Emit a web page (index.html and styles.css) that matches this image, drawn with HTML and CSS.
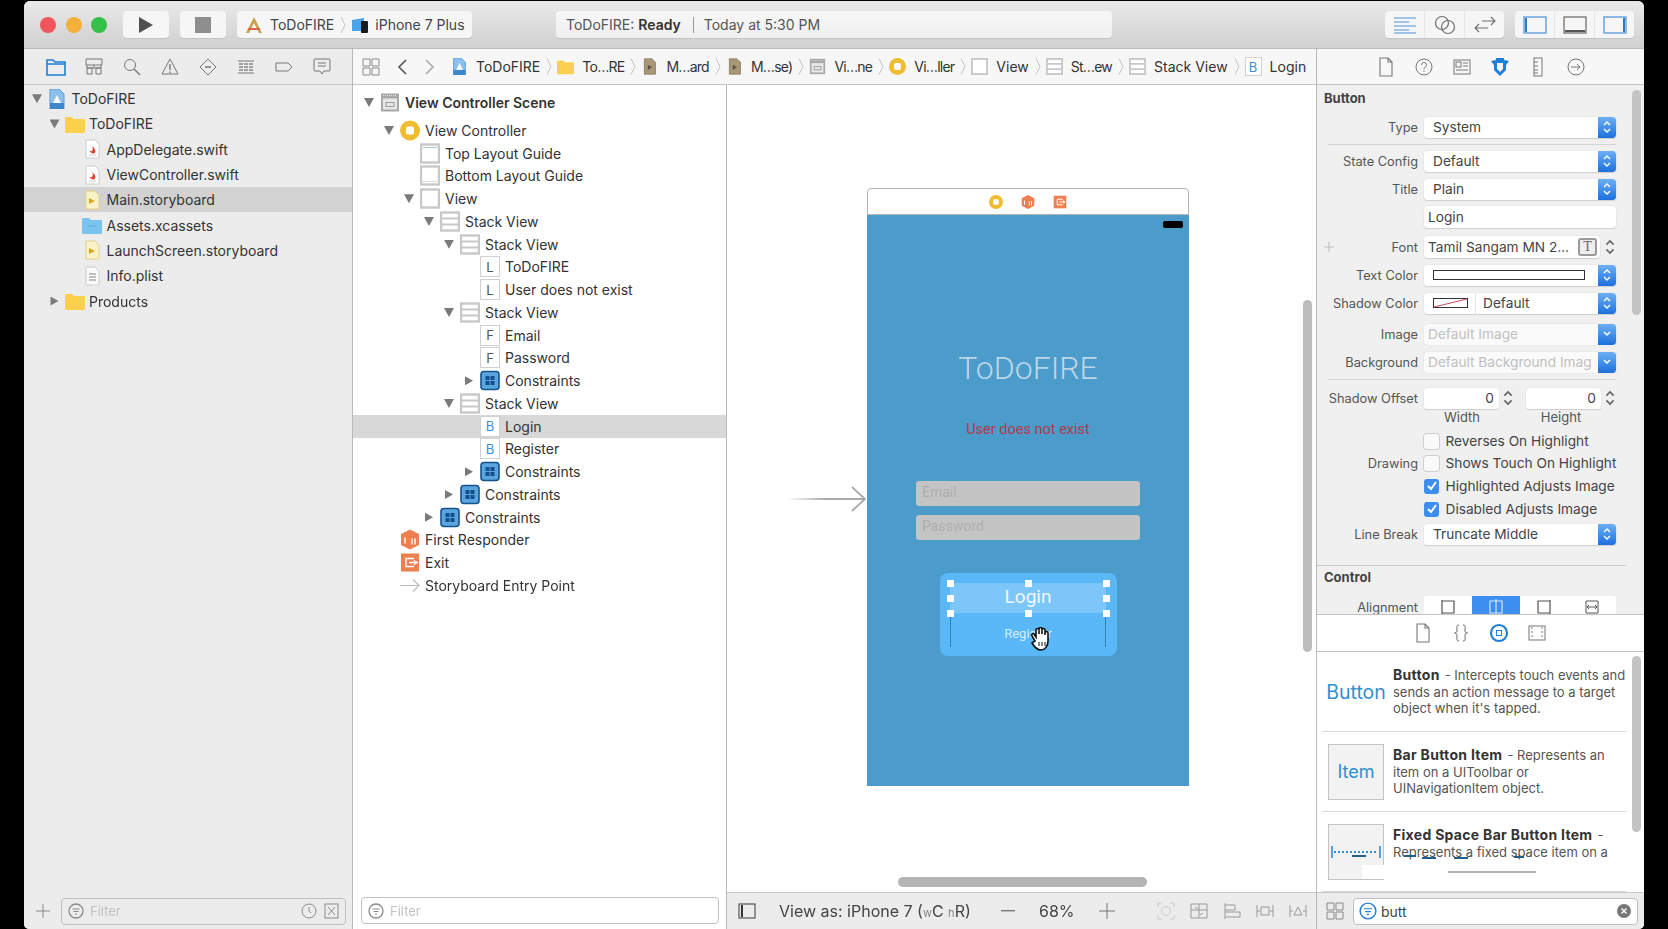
FILE: index.html
```html
<!DOCTYPE html>
<html lang="en">
<head>
    <meta charset="UTF-8">
    <title>ToDoFIRE - Main.storyboard</title>
    <link rel="stylesheet" href="styles.css">
</head>
<body>
    <svg class="defs" width="0" height="0">
        <symbol id="i-swift" viewBox="0 0 20 20"><path d="M4 1h9l4 4v14H4z" fill="#fff" stroke="#ccc"/><path d="M7 12c3 1 5-1 3-5 3 2 4 5 3 7-2 1-4 0-6-2z" fill="#e0452f"/><path d="M7 16h7" stroke="#ccc"/></symbol>
        <symbol id="i-board" viewBox="0 0 20 20"><path d="M4 1h9l4 4v14H4z" fill="#fbf3c8" stroke="#e0cf8a"/><path d="M7 8l6 3-6 3z" fill="#d9a520"/></symbol>
        <symbol id="i-brown" viewBox="0 0 20 20"><path d="M4 1h9l4 4v14H4z" fill="#a89878" stroke="#8c7d60"/><path d="M8 8l5 3-5 3z" fill="#5d5140"/></symbol>
        <symbol id="i-plist" viewBox="0 0 20 20"><path d="M4 1h9l4 4v14H4z" fill="#fafafa" stroke="#ccc"/><path d="M7 8h7M7 11h7M7 14h7" stroke="#aaa" stroke-width="1.4"/></symbol>
        <symbol id="i-folder" viewBox="0 0 20 20"><path d="M0 4a1 1 0 0 1 1-1h6l2 2h10a1 1 0 0 1 1 1v12a1 1 0 0 1-1 1H1a1 1 0 0 1-1-1z" fill="#fcd04f"/></symbol>
        <symbol id="i-assets" viewBox="0 0 20 20"><path d="M0 4a1 1 0 0 1 1-1h6l2 2h10a1 1 0 0 1 1 1v12a1 1 0 0 1-1 1H1a1 1 0 0 1-1-1z" fill="#78c4ee"/><path d="M6 11h8" stroke="#5aa8d8"/></symbol>
        <symbol id="i-project" viewBox="0 0 20 20"><path d="M3 0h9l5 5v15H3z" fill="#8cc0ef" stroke="#5a9bd8"/><path d="M10 6l4 8H6z" fill="#fff"/><path d="M3 14h14v6H3z" fill="#3d87cf"/></symbol>
        <symbol id="i-scene" viewBox="0 0 20 20"><rect x="1" y="1" width="18" height="18" fill="#a8a8a8"/><rect x="3" y="6" width="14" height="11" fill="#e8e8e8"/><rect x="6" y="10" width="8" height="4" fill="none" stroke="#999"/><path d="M3 3h14" stroke="#e0e0e0" stroke-dasharray="1 1"/></symbol>
        <symbol id="i-vc" viewBox="0 0 20 20"><circle cx="10" cy="10" r="10" fill="#f0bd30"/><rect x="6" y="6" width="8" height="8" rx="2" fill="#fff"/></symbol>
        <symbol id="i-top" viewBox="0 0 20 20"><rect x="1" y="1" width="18" height="18" fill="#fff" stroke="#c8c8c8" stroke-width="2.4"/><path d="M3 4h14" stroke="#a9c4d6"/></symbol>
        <symbol id="i-bottom" viewBox="0 0 20 20"><rect x="1" y="1" width="18" height="18" fill="#fff" stroke="#c8c8c8" stroke-width="2.4"/><path d="M3 16h14" stroke="#ddd"/></symbol>
        <symbol id="i-view" viewBox="0 0 20 20"><rect x="1" y="1" width="18" height="18" fill="#fff" stroke="#c8c8c8" stroke-width="2.4"/></symbol>
        <symbol id="i-stack" viewBox="0 0 20 20"><rect x="1" y="1" width="18" height="18" fill="#fff" stroke="#c8c8c8" stroke-width="2.4"/><path d="M2 7h16M2 13h16" stroke="#c8c8c8" stroke-width="2"/></symbol>
        <symbol id="i-constraints" viewBox="0 0 20 20"><rect x="1" y="1" width="18" height="18" rx="3" fill="#5ba5df" stroke="#14538f" stroke-width="1.6"/><path d="M5.500 5.500h4v4h-4zM10.500 5.500h4v4h-4zM5.500 10.500h4v4h-4zM10.500 10.500h4v4h-4z" fill="#134f8a"/></symbol>
        <symbol id="i-responder" viewBox="0 0 20 20"><path d="M10 0l9 4.500v11L10 20l-9-4.500v-11z" fill="#ee7f50"/><path d="M5 8v6M12 9v6M15 9v6" stroke="#fff" stroke-width="1.4"/></symbol>
        <symbol id="i-exit" viewBox="0 0 20 20"><rect x="1" y="1" width="18" height="18" fill="#ee7f50"/><path d="M14 6H6v8h8M9 10h8M14 8l3 2-3 2" fill="none" stroke="#fff" stroke-width="1.4"/></symbol>
        <symbol id="i-arrow" viewBox="0 0 20 20"><path d="M0 10h19M13 4l6 6-6 6" fill="none" stroke="#bbb" stroke-width="1.1"/></symbol>
        <symbol id="i-chev" viewBox="0 0 6 18"><path d="M1 1l4 8-4 8" fill="none" stroke="#c4c4c4"/></symbol>
        <symbol id="i-updown" viewBox="0 0 10 16"><path d="M2 6l3-3 3 3M2 10l3 3 3-3" fill="none" stroke="currentColor" stroke-width="1.4"/></symbol>
        <symbol id="i-filter" viewBox="0 0 16 16"><circle cx="8" cy="8" r="7" fill="none" stroke="currentColor" stroke-width="1.3"/><path d="M4.500 6h7M5.500 8.500h5M7 11h2" stroke="currentColor"/></symbol>
        <symbol id="i-grid" viewBox="0 0 18 18"><path d="M1 1h7v7H1zM10 1h7v7h-7zM1 10h7v7H1zM10 10h7v7h-7z" fill="none" stroke="currentColor"/></symbol>
        <symbol id="i-doc" viewBox="0 0 16 20"><path d="M2 1h8l4 4v14H2zM10 1v4h4" fill="none" stroke="#777" stroke-width="1.1"/></symbol>
    </svg>

    <div class="window">
        <header class="titlebar">
            <div class="lights">
                <span class="light red"></span>
                <span class="light yellow"></span>
                <span class="light green"></span>
            </div>
            <div class="tbtn"><svg width="16" height="18" viewBox="0 0 16 18"><path d="M1 1l14 8-14 8z" fill="#505050"/></svg></div>
            <div class="tbtn"><span class="stop"></span></div>
            <div class="tbtn scheme">
                <svg class="hammer" width="20" height="20" viewBox="0 0 20 20"><path d="M10 2l8 16h-3L10 8 5 18H2z" fill="#c9a24a"/><path d="M4 14h12" stroke="#d9694a" stroke-width="2"/></svg>
                <span>ToDoFIRE</span>
                <svg class="chev-lg" width="6" height="18"><use href="#i-chev"/></svg>
                <svg width="18" height="18" viewBox="0 0 18 18"><path d="M1 4l12-2v13H1z" fill="#4da3e8"/><rect x="10" y="5" width="7" height="12" rx="1" fill="#1a1a1a"/></svg>
                <span>iPhone 7 Plus</span>
            </div>
            <div class="activity">
                <span>ToDoFIRE: <b>Ready</b></span>
                <i class="activity-sep"></i>
                <span>Today at 5:30 PM</span>
            </div>
            <div class="tgroups">
                <div class="tgroup">
                    <span class="seg"><svg width="24" height="20" viewBox="0 0 24 20"><path d="M1 3h22M1 7h15M1 11h22M1 15h15M1 18h22" stroke="#4a90d9" stroke-width="1.2"/></svg></span>
                    <span class="seg"><svg width="22" height="20" viewBox="0 0 22 20"><circle cx="8" cy="8" r="6.500" fill="none" stroke="#6e6e6e" stroke-width="1.2"/><circle cx="14" cy="12" r="6.500" fill="none" stroke="#6e6e6e" stroke-width="1.2"/></svg></span>
                    <span class="seg"><svg width="24" height="20" viewBox="0 0 24 20"><path d="M9 6h13M18 2l4 4-4 4M15 13H2M6 9l-4 4 4 4" fill="none" stroke="#6e6e6e" stroke-width="1.1"/></svg></span>
                </div>
                <div class="tgroup">
                    <span class="seg"><svg width="24" height="18" viewBox="0 0 24 18"><rect x="1" y="1" width="22" height="16" fill="none" stroke="#4a90d9" stroke-width="1.2"/><path d="M3 2v14" stroke="#2f78c4" stroke-width="2"/></svg></span>
                    <span class="seg"><svg width="24" height="18" viewBox="0 0 24 18"><rect x="1" y="1" width="22" height="16" fill="none" stroke="#666" stroke-width="1.2"/><path d="M2 15h20" stroke="#555" stroke-width="2"/></svg></span>
                    <span class="seg"><svg width="24" height="18" viewBox="0 0 24 18"><rect x="1" y="1" width="22" height="16" fill="none" stroke="#4a90d9" stroke-width="1.2"/><path d="M21 2v14" stroke="#2f78c4" stroke-width="2"/></svg></span>
                </div>
            </div>
        </header>

        <div class="workspace">
            <aside class="navigator">
                <div class="nav-tabs">
                    <svg width="20" height="18" viewBox="0 0 20 18"><path d="M1 2h6l2 2h10v13H1zM1 6h18" fill="none" stroke="#1f7fd6" stroke-width="1.6"/></svg>
                    <svg width="18" height="18" viewBox="0 0 18 18"><path d="M1 1h16v6H1zM2 7v3h14V7M9 7v3M2 10h5v6H2zM11 10h5v6h-5z" fill="none" stroke="#777"/></svg>
                    <svg width="18" height="18" viewBox="0 0 18 18"><circle cx="7" cy="7" r="5.500" fill="none" stroke="#777"/><path d="M11 11l6 6" stroke="#777" stroke-width="1.4"/></svg>
                    <svg width="18" height="18" viewBox="0 0 18 18"><path d="M9 1l8 15H1z" fill="none" stroke="#777"/><path d="M9 6v6M9 13.500v1.500" stroke="#777" stroke-width="1.4"/></svg>
                    <svg width="18" height="18" viewBox="0 0 18 18"><path d="M9 1l8 8-8 8-8-8z" fill="none" stroke="#777"/><path d="M6 9h6" stroke="#777" stroke-width="1.4"/></svg>
                    <svg width="18" height="18" viewBox="0 0 18 18"><path d="M1 3h16M1 15h16" stroke="#777"/><path d="M2 6h14M2 9h14M2 12h14" stroke="#888" stroke-width="1.500" stroke-dasharray="4 1"/></svg>
                    <svg width="18" height="18" viewBox="0 0 18 18"><path d="M1 5h12l4 4-4 4H1z" fill="none" stroke="#777"/></svg>
                    <svg width="18" height="18" viewBox="0 0 18 18"><path d="M2 1h14a1 1 0 0 1 1 1v10a1 1 0 0 1-1 1h-5l-2 3-2-3H2a1 1 0 0 1-1-1V2a1 1 0 0 1 1-1zM5 5h8M5 8h8" fill="none" stroke="#777"/></svg>
                </div>
                <div class="files">
                    <div class="file lv0"><i class="tri down"></i><svg><use href="#i-project"/></svg><span>ToDoFIRE</span></div>
                    <div class="file lv1"><i class="tri down"></i><svg><use href="#i-folder"/></svg><span>ToDoFIRE</span></div>
                    <div class="file lv2"><i class="tri none"></i><svg><use href="#i-swift"/></svg><span>AppDelegate.swift</span></div>
                    <div class="file lv2"><i class="tri none"></i><svg><use href="#i-swift"/></svg><span>ViewController.swift</span></div>
                    <div class="file lv2 current"><i class="tri none"></i><svg><use href="#i-board"/></svg><span>Main.storyboard</span></div>
                    <div class="file lv2"><i class="tri none"></i><svg><use href="#i-assets"/></svg><span>Assets.xcassets</span></div>
                    <div class="file lv2"><i class="tri none"></i><svg><use href="#i-board"/></svg><span>LaunchScreen.storyboard</span></div>
                    <div class="file lv2"><i class="tri none"></i><svg><use href="#i-plist"/></svg><span>Info.plist</span></div>
                    <div class="file lv1"><i class="tri right"></i><svg><use href="#i-folder"/></svg><span>Products</span></div>
                </div>
                <div class="filter-bar">
                    <svg class="plus" width="14" height="14" viewBox="0 0 14 14"><path d="M7 0v14M0 7h14" stroke="#8a8a8a"/></svg>
                    <div class="filter-box">
                        <svg class="filter-icon" width="16" height="16"><use href="#i-filter"/></svg>
                        <span class="filter-text">Filter</span>
                        <svg class="filter-end" width="16" height="16" viewBox="0 0 16 16"><circle cx="8" cy="8" r="7" fill="none" stroke="#8a8a8a"/><path d="M8 4v4l2 2" fill="none" stroke="#8a8a8a"/></svg>
                        <svg width="15" height="16" viewBox="0 0 15 16"><rect x="1" y="1" width="13" height="14" fill="none" stroke="#8a8a8a"/><path d="M4 4l7 8M11 4l-7 8" stroke="#8a8a8a"/></svg>
                    </div>
                </div>
            </aside>

            <main class="editor">
                <div class="crumbs">
                    <svg class="crumb-grid" width="18" height="18"><use href="#i-grid"/></svg>
                    <svg class="crumb-back" width="10" height="16" viewBox="0 0 10 16"><path d="M9 1L2 8l7 7" fill="none" stroke="#555" stroke-width="1.6"/></svg>
                    <svg class="crumb-fwd" width="10" height="16" viewBox="0 0 10 16"><path d="M1 1l7 7-7 7" fill="none" stroke="#aaa" stroke-width="1.6"/></svg>
                    <div class="crumb"><svg><use href="#i-project"/></svg><span>ToDoFIRE</span></div>
                    <div class="crumb"><svg><use href="#i-folder"/></svg><span class="abbr">To…RE</span></div>
                    <div class="crumb"><svg><use href="#i-brown"/></svg><span class="abbr">M…ard</span></div>
                    <div class="crumb"><svg><use href="#i-brown"/></svg><span class="abbr">M…se)</span></div>
                    <div class="crumb"><svg><use href="#i-scene"/></svg><span class="abbr">Vi…ne</span></div>
                    <div class="crumb"><svg><use href="#i-vc"/></svg><span class="abbr">Vi…ller</span></div>
                    <div class="crumb"><svg><use href="#i-view"/></svg><span>View</span></div>
                    <div class="crumb"><svg><use href="#i-stack"/></svg><span class="abbr">St…ew</span></div>
                    <div class="crumb"><svg><use href="#i-stack"/></svg><span>Stack View</span></div>
                    <div class="crumb last"><b class="letter blue">B</b><span>Login</span></div>
                </div>

                <div class="editor-body">
                    <section class="outline">
                        <div class="nodes">
                            <div class="node lv0 scene-row"><i class="tri down"></i><svg><use href="#i-scene"/></svg><span>View Controller Scene</span></div>
                            <div class="node lv1"><i class="tri down"></i><svg><use href="#i-vc"/></svg><span>View Controller</span></div>
                            <div class="node lv2"><i class="tri none"></i><svg><use href="#i-top"/></svg><span>Top Layout Guide</span></div>
                            <div class="node lv2"><i class="tri none"></i><svg><use href="#i-bottom"/></svg><span>Bottom Layout Guide</span></div>
                            <div class="node lv2"><i class="tri down"></i><svg><use href="#i-view"/></svg><span>View</span></div>
                            <div class="node lv3"><i class="tri down"></i><svg><use href="#i-stack"/></svg><span>Stack View</span></div>
                            <div class="node lv4"><i class="tri down"></i><svg><use href="#i-stack"/></svg><span>Stack View</span></div>
                            <div class="node lv5"><i class="tri none"></i><b class="letter">L</b><span>ToDoFIRE</span></div>
                            <div class="node lv5"><i class="tri none"></i><b class="letter">L</b><span>User does not exist</span></div>
                            <div class="node lv4"><i class="tri down"></i><svg><use href="#i-stack"/></svg><span>Stack View</span></div>
                            <div class="node lv5"><i class="tri none"></i><b class="letter">F</b><span>Email</span></div>
                            <div class="node lv5"><i class="tri none"></i><b class="letter">F</b><span>Password</span></div>
                            <div class="node lv5"><i class="tri right"></i><svg><use href="#i-constraints"/></svg><span>Constraints</span></div>
                            <div class="node lv4"><i class="tri down"></i><svg><use href="#i-stack"/></svg><span>Stack View</span></div>
                            <div class="node lv5 current"><i class="tri none"></i><b class="letter blue">B</b><span>Login</span></div>
                            <div class="node lv5"><i class="tri none"></i><b class="letter blue">B</b><span>Register</span></div>
                            <div class="node lv5"><i class="tri right"></i><svg><use href="#i-constraints"/></svg><span>Constraints</span></div>
                            <div class="node lv4"><i class="tri right"></i><svg><use href="#i-constraints"/></svg><span>Constraints</span></div>
                            <div class="node lv3"><i class="tri right"></i><svg><use href="#i-constraints"/></svg><span>Constraints</span></div>
                            <div class="node lv1"><i class="tri none"></i><svg><use href="#i-responder"/></svg><span>First Responder</span></div>
                            <div class="node lv1"><i class="tri none"></i><svg><use href="#i-exit"/></svg><span>Exit</span></div>
                            <div class="node lv1"><i class="tri none"></i><svg><use href="#i-arrow"/></svg><span>Storyboard Entry Point</span></div>
                        </div>
                        <div class="filter-bar outline-filter">
                            <div class="filter-box white">
                                <svg class="filter-icon" width="16" height="16"><use href="#i-filter"/></svg>
                                <span class="filter-text">Filter</span>
                            </div>
                        </div>
                    </section>

                    <section class="canvas">
                        <div class="stage">
                            <svg class="entry-arrow" width="80" height="30" viewBox="0 0 80 30">
                                <defs><linearGradient id="fade"><stop offset="0" stop-color="#aaa" stop-opacity="0"/><stop offset=".5" stop-color="#aaa"/></linearGradient></defs>
                                <rect y="14" width="78" height="2" fill="url(#fade)"/>
                                <path d="M65 3l13 12-13 12" fill="none" stroke="#aaa" stroke-width="1.8"/>
                            </svg>
                            <div class="scene">
                                <div class="scene-bar">
                                    <svg width="14" height="14"><use href="#i-vc"/></svg>
                                    <svg width="14" height="14"><use href="#i-responder"/></svg>
                                    <svg width="14" height="14"><use href="#i-exit"/></svg>
                                </div>
                                <div class="phone">
                                    <span class="battery"></span>
                                    <div class="app-title">ToDoFIRE</div>
                                    <div class="app-error">User does not exist</div>
                                    <div class="app-field first">Email</div>
                                    <div class="app-field">Password</div>
                                    <div class="app-buttons">
                                        <div class="selection">
                                            <div class="app-login">Login</div>
                                            <i class="rail left"></i>
                                            <i class="rail right"></i>
                                            <i class="handle h1"></i><i class="handle h2"></i><i class="handle h3"></i>
                                            <i class="handle h4"></i><i class="handle h5"></i>
                                            <i class="handle h6"></i><i class="handle h7"></i><i class="handle h8"></i>
                                        </div>
                                        <div class="app-register">Register</div>
                                        <svg class="hand" width="22" height="24" viewBox="0 0 22 24"><path d="M5 14L2 9c-1-2 1-3 2-2l2 3V3c0-2 3-2 3 0v4-5c0-2 3-2 3 0v5-4c0-2 3-2 3 0v5-2c0-2 3-2 3 0v8c0 5-3 9-7 9s-6-2-9-7z" fill="#fff" stroke="#111" stroke-width="1.6"/><path d="M9 15v4M12 15v4M15 15v4" stroke="#111"/></svg>
                                    </div>
                                </div>
                            </div>
                            <div class="hscroll"></div>
                            <div class="vscroll"></div>
                        </div>
                        <div class="canvas-bar">
                            <svg class="bar-toggle" width="18" height="16" viewBox="0 0 18 16"><rect x="1" y="1" width="16" height="14" fill="none" stroke="#555" stroke-width="1.2"/><path d="M4 2v12" stroke="#333" stroke-width="2"/></svg>
                            <span class="view-as">View as: iPhone 7 (<small>w</small>C <small>h</small>R)</span>
                            <svg class="zoom-minus" width="14" height="2"><rect width="14" height="1.400" fill="#777"/></svg>
                            <span class="zoom-level">68%</span>
                            <svg class="zoom-plus" width="16" height="16" viewBox="0 0 16 16"><path d="M8 0v16M0 8h16" stroke="#777"/></svg>
                            <svg class="bar-tool update" width="18" height="18" viewBox="0 0 18 18"><path d="M1 5V1h4M13 1h4v4M17 13v4h-4M5 17H1v-4" fill="none" stroke="#ccc"/><circle cx="9" cy="9" r="4.500" fill="none" stroke="#ccc"/></svg>
                            <svg class="bar-tool" width="18" height="18" viewBox="0 0 18 18"><path d="M1 2h16v14H1zM1 8h16M9 2v14M5 5l3 2M13 11l-3 2" fill="none" stroke="#999"/></svg>
                            <svg class="bar-tool" width="18" height="18" viewBox="0 0 18 18"><path d="M2 1v16M2 3h10v5H2M2 10h15v5H2" fill="none" stroke="#999"/></svg>
                            <svg class="bar-tool" width="18" height="18" viewBox="0 0 18 18"><path d="M1 3v12M17 3v12M1 9h3M14 9h3M5 5h8v8H5z" fill="none" stroke="#999"/></svg>
                            <svg class="bar-tool" width="18" height="18" viewBox="0 0 18 18"><path d="M1 3v12M17 3v12M1 9h3M14 9h3M9 5l4 8H5z" fill="none" stroke="#999"/></svg>
                        </div>
                    </section>
                </div>
            </main>

            <aside class="utilities">
                <div class="util-tabs">
                    <svg width="16" height="20"><use href="#i-doc"/></svg>
                    <svg width="18" height="18" viewBox="0 0 18 18"><circle cx="9" cy="9" r="8" fill="none" stroke="#777"/><path d="M6.500 7a2.500 2.500 0 1 1 3.500 2.300c-.7.4-1 .8-1 1.700M9 12.500V14" fill="none" stroke="#777"/></svg>
                    <svg width="18" height="16" viewBox="0 0 18 16"><rect x="1" y="1" width="16" height="14" fill="none" stroke="#777"/><rect x="3" y="3" width="5" height="5" fill="none" stroke="#777"/><path d="M10 4h5M10 7h5M3 11h12" stroke="#777"/></svg>
                    <svg width="20" height="20" viewBox="0 0 20 20"><path d="M1 4l5-1 0-2h8v2l5 1-3 4v5l-6 6-6-6V8z" fill="#1f7fd6"/><path d="M7 6h6v6l-3 3-3-3z" fill="#f2f2f2"/></svg>
                    <svg width="10" height="20" viewBox="0 0 10 20"><rect x="1" y="1" width="8" height="18" fill="none" stroke="#777"/><path d="M1 5h4M1 9h4M1 13h4M1 16h4" stroke="#777"/></svg>
                    <svg width="18" height="18" viewBox="0 0 18 18"><circle cx="9" cy="9" r="8" fill="none" stroke="#777"/><path d="M4 9h9M10 6l3 3-3 3" fill="none" stroke="#777"/></svg>
                </div>

                <div class="inspector">
                    <h3 class="section-title">Button</h3>
                    <div class="row mt-10"><label>Type</label><div class="field select">System<span class="stepper"><svg width="10" height="16"><use href="#i-updown"/></svg></span></div></div>
                    <div class="rule mt-6 mb-5"></div>
                    <div class="row"><label>State Config</label><div class="field select">Default<span class="stepper"><svg width="10" height="16"><use href="#i-updown"/></svg></span></div></div>
                    <div class="row mt-6"><label>Title</label><div class="field select">Plain<span class="stepper"><svg width="10" height="16"><use href="#i-updown"/></svg></span></div></div>
                    <div class="row mt-6"><label></label><div class="field text tall">Login</div></div>
                    <div class="row mt-8">
                        <svg class="row-plus" width="10" height="10" viewBox="0 0 10 10"><path d="M5 0v10M0 5h10" stroke="#bbb"/></svg>
                        <label>Font</label>
                        <div class="font-cell">
                            <div class="field text font-field tall"><span>Tamil Sangam MN 2…</span><span class="font-t">T</span></div>
                            <svg class="mini-step" width="12" height="22"><use href="#i-updown"/></svg>
                        </div>
                    </div>
                    <div class="row mt-6"><label>Text Color</label><div class="field select"><span class="swatch"></span><span class="stepper"><svg width="10" height="16"><use href="#i-updown"/></svg></span></div></div>
                    <div class="row mt-6"><label>Shadow Color</label><div class="field select shadow-field"><svg class="no-color" width="35" height="10" viewBox="0 0 35 10"><rect x=".5" y=".5" width="34" height="9" fill="#fff" stroke="#333"/><path d="M1 9L34 1" stroke="#d04a5a"/></svg><i class="inner-sep"></i>Default<span class="stepper"><svg width="10" height="16"><use href="#i-updown"/></svg></span></div></div>
                    <div class="row mt-9"><label>Image</label><div class="field select off">Default Image<span class="stepper"><svg width="10" height="8" viewBox="0 0 10 8"><path d="M2 2l3 3 3-3" fill="none" stroke="#fff" stroke-width="1.500"/></svg></span></div></div>
                    <div class="row mt-6"><label>Background</label><div class="field select off">Default Background Imag<span class="stepper"><svg width="10" height="8" viewBox="0 0 10 8"><path d="M2 2l3 3 3-3" fill="none" stroke="#fff" stroke-width="1.500"/></svg></span></div></div>
                    <div class="rule mt-6"></div>
                    <div class="row mt-7">
                        <label>Shadow Offset</label>
                        <div class="offsets">
                            <div class="field num">0</div><svg class="mini-step" width="12" height="22"><use href="#i-updown"/></svg>
                            <div class="field num">0</div><svg class="mini-step" width="12" height="22"><use href="#i-updown"/></svg>
                        </div>
                    </div>
                    <div class="offset-labels"><span>Width</span><span>Height</span></div>
                    <div class="row mt-5"><label></label><div class="check"><i class="box"></i>Reverses On Highlight</div></div>
                    <div class="row"><label>Drawing</label><div class="check"><i class="box"></i>Shows Touch On Highlight</div></div>
                    <div class="row mt-1"><label></label><div class="check"><i class="box on"><svg width="16" height="16" viewBox="0 0 16 16"><path d="M4 8l3 3 5-7" fill="none" stroke="#fff" stroke-width="2"/></svg></i>Highlighted Adjusts Image</div></div>
                    <div class="row mt-1"><label></label><div class="check"><i class="box on"><svg width="16" height="16" viewBox="0 0 16 16"><path d="M4 8l3 3 5-7" fill="none" stroke="#fff" stroke-width="2"/></svg></i>Disabled Adjusts Image</div></div>
                    <div class="row mt-3"><label>Line Break</label><div class="field select">Truncate Middle<span class="stepper"><svg width="10" height="16"><use href="#i-updown"/></svg></span></div></div>
                    <div class="rule wide mt-20"></div>
                    <h3 class="section-title mt-3">Control</h3>
                    <div class="row mt-11">
                        <label>Alignment</label>
                        <div class="segments">
                            <span><svg width="16" height="16" viewBox="0 0 16 16"><path d="M2 1v14M2 2h12v12H2" fill="none" stroke="#555" stroke-width="1.200"/></svg></span>
                            <span class="on"><svg width="16" height="16" viewBox="0 0 16 16"><path d="M2 2h12v12H2zM8 0v16" fill="none" stroke="#d6e8fb" stroke-width="1.200"/></svg></span>
                            <span><svg width="16" height="16" viewBox="0 0 16 16"><path d="M14 1v14M14 2H2v12h12" fill="none" stroke="#555" stroke-width="1.200"/></svg></span>
                            <span><svg width="16" height="16" viewBox="0 0 16 16"><path d="M2 2h12v12H2zM3 8h10M5 6L3 8l2 2M11 6l2 2-2 2" fill="none" stroke="#555"/></svg></span>
                        </div>
                    </div>
                </div>

                <div class="lib-tabs">
                    <svg width="16" height="20"><use href="#i-doc"/></svg>
                    <svg width="16" height="18" viewBox="0 0 16 18"><path d="M6 1C3 1 4 4 4 7c0 1-1 2-2.500 2C3 9 4 10 4 11c0 3-1 6 2 6M10 1c3 0 2 3 2 6 0 1 1 2 2.500 2-1.500 0-2.500 1-2.500 2 0 3 1 6-2 6" fill="none" stroke="#666"/></svg>
                    <svg width="20" height="20" viewBox="0 0 20 20"><circle cx="10" cy="10" r="8" fill="none" stroke="#1f7fd6" stroke-width="2.200"/><rect x="7.500" y="7.500" width="5" height="5" fill="none" stroke="#1f7fd6"/></svg>
                    <svg width="18" height="16" viewBox="0 0 18 16"><rect x="1" y="1" width="16" height="14" fill="none" stroke="#777"/><path d="M4 2v12M14 2v12" stroke="#777" stroke-dasharray="2 2"/></svg>
                </div>

                <div class="library">
                    <div class="lib-item">
                        <div class="lib-thumb"><span class="lib-button">Button</span></div>
                        <div class="lib-text">
                            <div class="lib-line"><b>Button</b><span>- Intercepts touch events and</span></div>
                            <div class="lib-line">sends an action message to a target</div>
                            <div class="lib-line">object when it's tapped.</div>
                        </div>
                    </div>
                    <div class="lib-item">
                        <div class="lib-thumb"><span class="lib-box lib-word">Item</span></div>
                        <div class="lib-text">
                            <div class="lib-line"><b>Bar Button Item</b><span>- Represents an</span></div>
                            <div class="lib-line">item on a UIToolbar or</div>
                            <div class="lib-line">UINavigationItem object.</div>
                        </div>
                    </div>
                    <div class="lib-item">
                        <div class="lib-thumb"><span class="lib-box"><svg width="50" height="12" viewBox="0 0 50 12"><path d="M1 0v12M49 0v12" stroke="#2f8fd0" stroke-width="1.600"/><path d="M3 6h44" stroke="#2f8fd0" stroke-width="2" stroke-dasharray="2 2"/></svg></span></div>
                        <div class="lib-text">
                            <div class="lib-line"><b>Fixed Space Bar Button Item</b><span>-</span></div>
                            <div class="lib-line">Represents a fixed space item on a</div>
                        </div>
                    </div>
                    <svg class="smear" width="304" height="40" viewBox="0 0 304 40">
                        <path d="M30 5h14M82 5h12M100 7h14M132 7h14M192 6h10" stroke="#1f5f8a" stroke-width="1.800"/>
                        <rect x="40" y="14" width="60" height="14" fill="#fff"/>
                        <path d="M126 21h88" stroke="#999" stroke-width="1.400"/>
                    </svg>
                </div>

                <div class="lib-search">
                    <svg class="lib-grid" width="18" height="18"><use href="#i-grid"/></svg>
                    <div class="search-box">
                        <svg class="search-icon" width="18" height="18"><use href="#i-filter"/></svg>
                        <span>butt</span>
                        <svg class="search-clear" width="14" height="14" viewBox="0 0 14 14"><circle cx="7" cy="7" r="7" fill="#777"/><path d="M4.500 4.500l5 5M9.500 4.500l-5 5" stroke="#fff" stroke-width="1.400"/></svg>
                    </div>
                </div>
            </aside>
        </div>
    </div>
</body>
</html>
```
FILE: styles.css
```css
* {
    margin: 0;
    padding: 0;
    box-sizing: border-box;
}

html, body {
    height: 100%;
    overflow: hidden;
}

body {
    background: #000;
    padding: 1px 24px 0;
    font-family: Inter, "Noto Sans", sans-serif;
    font-size: 14px;
    color: #333;
}

.defs {
    position: absolute;
}

i {
    font-style: normal;
}

.window {
    width: 1620px;
    height: 928px;
    display: flex;
    flex-direction: column;
    border-radius: 6px 6px 5px 5px;
    overflow: hidden;
    background: #ececec;
    filter: blur(0.6px);
}

/* title bar */
.titlebar {
    height: 48px;
    flex: none;
    display: flex;
    align-items: center;
    padding: 0 10px 0 16px;
    background: linear-gradient(#e9e9e9, #d0d0d0);
    border-bottom: 1px solid #bdbdbd;
}

.lights {
    display: flex;
    gap: 9.5px;
    margin-right: 16px;
}

.light {
    width: 16px;
    height: 16px;
    border-radius: 50%;
}

.red { background: #f0545c; }
.yellow { background: #f5b03c; }
.green { background: #35c04a; }

.tbtn {
    width: 46px;
    height: 27px;
    margin-right: 11px;
    border-radius: 4px;
    background: #f6f6f6;
    display: flex;
    align-items: center;
    justify-content: center;
    box-shadow: 0 1px 0 #c4c4c4;
}

.stop {
    width: 16px;
    height: 16px;
    background: #8e8e8e;
}

.scheme {
    width: 235px;
    margin-right: 84px;
    justify-content: flex-start;
    padding-left: 7px;
    gap: 6px;
    color: #444;
}

.chev-lg {
    margin-right: -1px;
}

.activity {
    width: 556px;
    height: 27px;
    border-radius: 4px;
    background: linear-gradient(#f7f7f7, #f0f0f0);
    box-shadow: 0 1px 0 #c4c4c4;
    display: flex;
    align-items: center;
    padding-left: 10px;
    color: #555;
}

.activity b {
    font-weight: 600;
    color: #333;
}

.activity-sep {
    width: 1px;
    height: 16px;
    background: #999;
    margin: 0 10px 0 12px;
}

.tgroups {
    margin-left: auto;
    display: flex;
    gap: 11px;
}

.tgroup {
    width: 119px;
    height: 27px;
    display: flex;
    border-radius: 4px;
    background: #f6f6f6;
    box-shadow: 0 1px 0 #c4c4c4;
}

.seg {
    flex: 1;
    display: flex;
    align-items: center;
    justify-content: center;
    border-left: 1px solid #e6e6e6;
}

.seg:first-child {
    border-left: none;
}

/* columns */
.workspace {
    flex: 1;
    min-height: 0;
    display: grid;
    grid-template-columns: 329px 964px 327px;
}

.navigator {
    display: flex;
    flex-direction: column;
    background: #ececec;
    border-right: 1px solid #b8b8b8;
}

.nav-tabs,
.util-tabs,
.lib-tabs {
    flex: none;
    display: grid;
    grid-auto-flow: column;
    grid-auto-columns: 38px;
    justify-items: center;
    align-items: center;
}

.nav-tabs {
    height: 36px;
    padding-left: 13px;
    border-bottom: 1px solid #c4c4c4;
}

.files {
    flex: 1;
    padding-top: 1px;
}

.file {
    height: 25.3px;
    display: flex;
    align-items: center;
}

.file svg {
    width: 20px;
    height: 20px;
    margin: 0 4.5px 0 5px;
}

.file.lv0 { padding-left: 8px; }
.file.lv1 { padding-left: 25.5px; }
.file.lv2 { padding-left: 43px; }

.current {
    background: #d2d2d2;
}

.tri {
    width: 10px;
    height: 9px;
    flex: none;
    background: #7a7a7a;
}

.tri.down { clip-path: polygon(0 0, 100% 0, 50% 100%); }
.tri.right { clip-path: polygon(10% 0, 90% 50%, 10% 100%); }
.tri.none { visibility: hidden; }

.filter-bar {
    height: 36px;
    flex: none;
    display: flex;
    align-items: center;
    padding-left: 12px;
}

.plus {
    margin-right: 11px;
}

.filter-box {
    width: 285px;
    height: 27px;
    border: 1px solid #c0c0c0;
    border-radius: 4px;
    display: flex;
    align-items: center;
    gap: 2px;
    padding: 0 6px;
    color: #8a8a8a;
}

.filter-box.white {
    width: 358px;
    background: #fff;
}

.filter-icon {
    margin-right: 4px;
}

.filter-text {
    color: #c2c2c2;
    font-size: 13px;
}

.filter-end {
    margin: 0 5px 0 auto;
}

/* editor */
.editor {
    display: flex;
    flex-direction: column;
    background: #fff;
    min-width: 0;
}

.crumbs {
    height: 36px;
    flex: none;
    display: flex;
    align-items: center;
    background: #f7f7f7;
    border-bottom: 1px solid #c4c4c4;
    padding-left: 9px;
    font-size: 14px;
    white-space: nowrap;
    overflow: hidden;
}

.crumbs > svg {
    flex: none;
}

.crumb-grid {
    color: #8a8a8a;
    margin-right: 17px;
}

.crumb-back {
    margin-right: 18px;
}

.crumb-fwd {
    margin-right: 16px;
}

.crumb {
    flex: none;
    display: flex;
    align-items: center;
    gap: 8px;
    padding-right: 17px;
    background: url("data:image/svg+xml,%3Csvg xmlns='http://www.w3.org/2000/svg' width='6' height='18'%3E%3Cpath d='M1 1l4 8-4 8' fill='none' stroke='%23c4c4c4'/%3E%3C/svg%3E") no-repeat right 5px center;
}

.crumb.last {
    background: none;
    padding-right: 0;
}

.crumb svg {
    width: 17px;
    height: 17px;
    flex: none;
}

.crumb .abbr {
    letter-spacing: -0.75px;
}

.crumb .letter {
    width: 17px;
    height: 19px;
}

.editor-body {
    flex: 1;
    min-height: 0;
    display: grid;
    grid-template-columns: 374px 590px;
}

.outline {
    display: flex;
    flex-direction: column;
    border-right: 1px solid #b8b8b8;
}

.nodes {
    flex: 1;
    padding-top: 6px;
}

.node {
    height: 22.75px;
    display: flex;
    align-items: center;
    white-space: nowrap;
}

.node.current {
    background: #d8d8d8;
}

.node svg,
.node .letter {
    width: 20px;
    height: 21px;
    flex: none;
    margin: 0 5px 0 6px;
}

.node.lv0 { padding-left: 11px; }
.node.lv1 { padding-left: 31px; }
.node.lv2 { padding-left: 51px; }
.node.lv3 { padding-left: 71px; }
.node.lv4 { padding-left: 91px; }
.node.lv5 { padding-left: 111px; }

.scene-row {
    font-weight: 600;
    margin-bottom: 5.3px;
}

.letter {
    display: flex;
    align-items: center;
    justify-content: center;
    background: #fff;
    border: 1px solid #d0d0d0;
    font-weight: 400;
    font-size: 13px;
    color: #555;
}

.letter.blue {
    color: #3a8fd6;
}

.outline-filter {
    height: 37px;
    padding-left: 8px;
}

.canvas {
    display: flex;
    flex-direction: column;
    min-width: 0;
}

.stage {
    flex: 1;
    position: relative;
    overflow: hidden;
}

.entry-arrow {
    position: absolute;
    left: 60px;
    top: 399px;
}

.scene {
    position: absolute;
    left: 140px;
    top: 103px;
    width: 322px;
    height: 598px;
    display: flex;
    flex-direction: column;
}

.scene-bar {
    height: 27px;
    flex: none;
    display: flex;
    align-items: center;
    justify-content: center;
    gap: 18px;
    background: #fff;
    border: 1.5px solid #b4b4b4;
    border-bottom: 1px solid #b4b4b4;
    border-radius: 4px 4px 0 0;
}

.phone {
    flex: 1;
    position: relative;
    background: #4b9bcb;
    text-align: center;
    display: flex;
    flex-direction: column;
    align-items: center;
    padding-top: 133px;
}

.battery {
    position: absolute;
    right: 6px;
    top: 6px;
    width: 20px;
    height: 7px;
    border-radius: 2px;
    background: #000;
}

.app-title {
    font-family: Roboto, sans-serif;
    font-weight: 300;
    font-size: 32px;
    line-height: 40px;
    height: 40px;
    color: #bcd6e6;
}

.app-error {
    margin-top: 32px;
    height: 20px;
    line-height: 20px;
    font-family: Roboto, sans-serif;
    font-size: 14.5px;
    color: #b23a50;
}

.app-field {
    width: 224px;
    height: 25px;
    margin-top: 9px;
    border-radius: 3px;
    background: #c4c4c4;
    color: #aeaeae;
    font-family: Roboto, sans-serif;
    text-align: left;
    line-height: 23px;
    padding-left: 6px;
}

.app-field.first {
    margin-top: 41px;
}

.app-buttons {
    position: relative;
    width: 177px;
    height: 83px;
    margin-top: 33px;
    border-radius: 8px;
    background: #5ab7f8;
    font-family: Roboto, sans-serif;
    padding-top: 10px;
}

.selection {
    position: relative;
    width: 156px;
    height: 30px;
    margin: 0 auto;
}

.app-login {
    height: 30px;
    background: #7cc6f9;
    color: #f0f8ff;
    font-size: 19px;
    line-height: 28px;
}

.app-register {
    margin-top: 11px;
    font-size: 13px;
    line-height: 20px;
    color: #d4ecfc;
}

.rail {
    position: absolute;
    top: 30px;
    width: 1px;
    height: 34px;
    background: #2f7fb8;
}

.rail.left { left: 0; }
.rail.right { right: 0; }

.handle {
    position: absolute;
    width: 7px;
    height: 7px;
    margin: -3px 0 0 -3px;
    background: #fff;
}

.h1 { left: 0; top: 0; }
.h2 { left: 0; top: 15px; }
.h3 { left: 0; top: 30px; }
.h4 { left: 78px; top: 0; }
.h5 { left: 78px; top: 30px; }
.h6 { left: 156px; top: 0; }
.h7 { left: 156px; top: 15px; }
.h8 { left: 156px; top: 30px; }

.hand {
    position: absolute;
    left: 90px;
    top: 54px;
}

.hscroll {
    position: absolute;
    left: 171px;
    top: 792px;
    width: 249px;
    height: 10px;
    border-radius: 5px;
    background: #b4b4b4;
}

.vscroll {
    position: absolute;
    right: 5px;
    top: 215px;
    width: 9px;
    height: 352px;
    border-radius: 5px;
    background: #bcbcbc;
}

.canvas-bar {
    height: 37px;
    flex: none;
    display: flex;
    align-items: center;
    background: #ececec;
    border-top: 1px solid #c8c8c8;
    padding-left: 11px;
    font-size: 16px;
    color: #444;
}

.view-as {
    margin-left: 23px;
    white-space: nowrap;
    width: 196px;
}

.view-as small {
    font-size: 11px;
    color: #888;
}

.zoom-minus {
    margin-left: 26px;
}

.zoom-level {
    margin-left: 24px;
    width: 36px;
}

.zoom-plus {
    margin-left: 24px;
}

.bar-tool {
    margin-left: 15px;
}

.bar-tool.update {
    margin-left: 42px;
}

/* right column */
.utilities {
    display: flex;
    flex-direction: column;
    background: #f0f0f0;
    border-left: 1px solid #b8b8b8;
    margin-left: -1px;
    position: relative;
    width: 328px;
    min-height: 0;
}

.util-tabs {
    height: 36px;
    padding-left: 50px;
    background: #f7f7f7;
    border-bottom: 1px solid #c4c4c4;
}

.inspector {
    height: 529px;
    flex: none;
    overflow: hidden;
    position: relative;
    padding-top: 5px;
    font-size: 13.7px;
}

.inspector::after {
    content: "";
    position: absolute;
    left: 315px;
    top: 5px;
    width: 9px;
    height: 225px;
    border-radius: 5px;
    background: #c4c4c4;
}

.section-title {
    height: 16px;
    line-height: 16px;
    font-size: 13px;
    font-weight: 700;
    color: #444;
    padding-left: 7px;
}

.row {
    position: relative;
    height: 22px;
    display: grid;
    grid-template-columns: 101px 192px;
    column-gap: 6px;
    align-items: center;
}

.row label {
    text-align: right;
    font-size: 12.8px;
    color: #555;
    white-space: nowrap;
}

.row-plus {
    position: absolute;
    left: 7px;
    top: 6px;
}

.mt-1 { margin-top: 1px; }
.mt-3 { margin-top: 3px; }
.mt-5 { margin-top: 5px; }
.mt-6 { margin-top: 6px; }
.mt-7 { margin-top: 7px; }
.mt-8 { margin-top: 8px; }
.mt-9 { margin-top: 9px; }
.mt-10 { margin-top: 10px; }
.mt-11 { margin-top: 11px; }
.mt-20 { margin-top: 20px; }
.mb-5 { margin-bottom: 5px; }

.rule {
    height: 1px;
    width: 288px;
    margin-left: 11px;
    background: #d4d4d4;
}

.rule.wide {
    width: 309px;
    margin-left: 0;
    background: #cacaca;
}

.field {
    height: 21px;
    background: #fff;
    border-radius: 3px;
    box-shadow: 0 0 1px #c4c4c4, 0 1px 1px #d0d0d0;
    display: flex;
    align-items: center;
    color: #444;
    white-space: nowrap;
    overflow: hidden;
    position: relative;
}

.field.select {
    padding-left: 9px;
}

.field.text {
    padding-left: 4px;
}

.field.tall {
    height: 22px;
}

.field.off {
    padding-left: 4px;
    color: #c0c0c0;
    background: #fafafa;
    box-shadow: 0 0 1px #b8b8b8;
}

.stepper {
    position: absolute;
    right: 0;
    top: 0;
    width: 18px;
    height: 100%;
    display: flex;
    align-items: center;
    justify-content: center;
    background: linear-gradient(#6cb0f5, #1d70dc);
    color: #fff;
    border-radius: 0 3px 3px 0;
}

.swatch {
    width: 152px;
    height: 10px;
    background: #fff;
    border: 1px solid #333;
}

.no-color {
    flex: none;
}

.inner-sep {
    width: 1px;
    height: 21px;
    margin: 0 7px;
    background: #e2e2e2;
}

.font-cell {
    display: flex;
    align-items: center;
    gap: 4px;
}

.font-field {
    width: 176px;
    flex: none;
    padding-right: 3px;
}

.font-field span:first-child {
    flex: 1;
    overflow: hidden;
}

.font-t {
    width: 19px;
    height: 18px;
    flex: none;
    border: 2px solid #9a9a9a;
    border-radius: 3px;
    background: #eee;
    text-align: center;
    font-family: "Liberation Serif", serif;
    font-size: 14px;
    line-height: 14px;
    color: #666;
}

.mini-step {
    flex: none;
    color: #666;
}

.offsets {
    display: flex;
    align-items: center;
    gap: 3px;
}

.field.num {
    width: 75px;
    flex: none;
    justify-content: flex-end;
    padding-right: 5px;
}

.offsets svg {
    margin-right: 9px;
}

.offset-labels {
    height: 16px;
    line-height: 16px;
    display: grid;
    grid-template-columns: 76px 122px;
    margin-left: 107px;
    text-align: center;
    font-size: 13px;
    color: #555;
}

.check {
    display: flex;
    align-items: center;
    gap: 6.5px;
    white-space: nowrap;
    color: #444;
}

.box {
    width: 15px;
    height: 15px;
    flex: none;
    border-radius: 3px;
    background: #fafafa;
    box-shadow: 0 0 0 1px #cfcfcf;
}

.box.on {
    background: #3c8ff0;
    box-shadow: none;
}

.box svg {
    display: block;
    margin: -0.5px;
}

.segments {
    display: grid;
    grid-template-columns: repeat(4, 1fr);
    height: 22px;
    background: #fff;
    border-radius: 3px;
}

.segments span {
    display: flex;
    align-items: center;
    justify-content: center;
}

.segments .on {
    background: #3c8ff0;
}

.lib-tabs {
    height: 38px;
    padding-left: 87px;
    background: #fff;
    border-top: 1px solid #c4c4c4;
    border-bottom: 1px solid #c4c4c4;
}

.library {
    flex: 1;
    min-height: 0;
    position: relative;
    background: #fff;
    overflow: hidden;
    padding-left: 5px;
}

.library::after {
    content: "";
    position: absolute;
    left: 315px;
    top: 4px;
    width: 9px;
    height: 176px;
    border-radius: 5px;
    background: #c4c4c4;
}

.lib-item {
    width: 304px;
    height: 80px;
    display: flex;
    border-bottom: 1px solid #d8d8d8;
}

.lib-thumb {
    width: 71px;
    height: 79px;
    flex: none;
    display: flex;
    align-items: center;
    justify-content: center;
    padding: 0 7px 0 4px;
}

.lib-button {
    font-size: 19.5px;
    color: #2f8fd0;
}

.lib-box {
    width: 56px;
    height: 56px;
    flex: none;
    display: flex;
    align-items: center;
    justify-content: center;
    background: #f2f2f2;
    border: 1.5px solid #c4c4c4;
}

.lib-word {
    font-size: 18px;
    color: #2f8fd0;
}

.lib-text {
    flex: 1;
    padding-top: 15px;
    font-size: 13px;
    line-height: 16.5px;
    color: #555;
    white-space: nowrap;
}

.lib-line {
    display: flex;
    gap: 5px;
}

.lib-line b {
    font-size: 14px;
    font-weight: 700;
    letter-spacing: 0.3px;
    color: #333;
}

.smear {
    position: absolute;
    left: 5px;
    top: 199px;
}

.lib-search {
    height: 37px;
    flex: none;
    display: flex;
    align-items: center;
    background: #ececec;
    border-top: 1px solid #c8c8c8;
    padding-left: 9px;
    color: #8a8a8a;
}

.lib-grid {
    margin-right: 9px;
}

.search-box {
    width: 285px;
    height: 27px;
    display: flex;
    align-items: center;
    gap: 4px;
    padding-left: 5px;
    background: #fff;
    border: 1px solid #c0c0c0;
    border-radius: 4px;
    color: #444;
}

.search-icon {
    color: #1f7fd6;
}

.search-clear {
    margin: 0 6px 0 auto;
}
```
